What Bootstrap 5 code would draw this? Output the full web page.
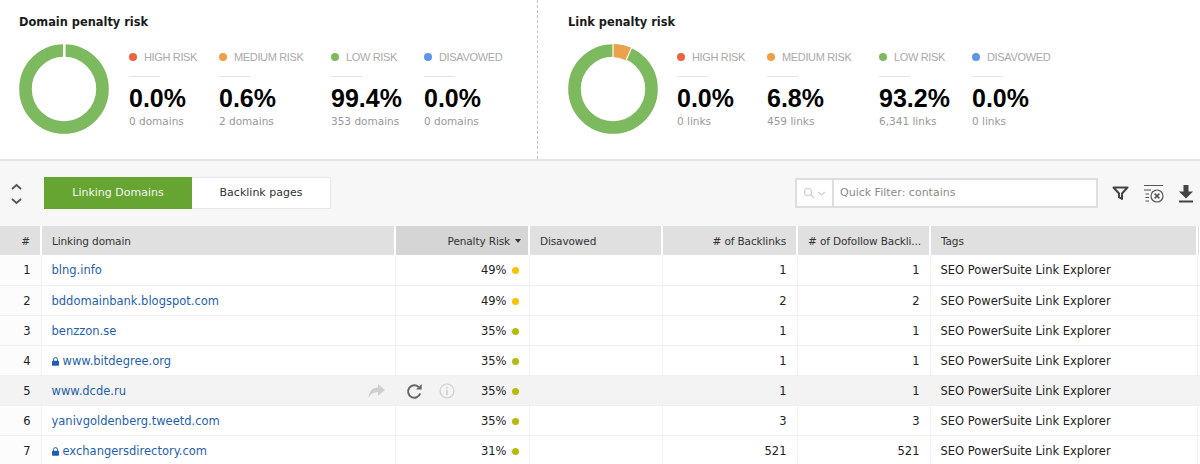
<!DOCTYPE html>
<html lang="en"><head><meta charset="utf-8"><title>Penalty risk</title>
<link href="https://cdn.jsdelivr.net/npm/bootstrap@5.3.0/dist/css/bootstrap.min.css" rel="stylesheet">
<style>
html,body{height:464px;overflow:hidden}
body{font-family:"DejaVu Sans","Liberation Sans",sans-serif;font-size:11px;color:#222;background:#fff}
.summary{height:161px;border-bottom:2px solid #e3e3e3}
.risk-block{padding:14px 0 0 19px;width:537px}
.risk-block+.risk-block{width:663px;border-left:1px dashed #c8c8c8;padding-left:30px}
.risk-title{font-size:11.4px;font-weight:700;color:#1c1c1c;line-height:16px;margin:0 0 14px}
.donut{width:90px;height:90px;margin-right:20px;flex:none}
.risk-block+.risk-block .donut{margin-right:19px}
.stat{padding-top:6px}
.stat:nth-child(1){width:90px}.stat:nth-child(2){width:112px}.stat:nth-child(3){width:93px}.stat:nth-child(4){width:90px}
.stat-label{font-family:"Liberation Sans",sans-serif;font-size:11px;letter-spacing:-.35px;color:#aaa;line-height:14px;display:flex;align-items:center;white-space:nowrap}
.stat-dot{width:8px;height:8px;border-radius:50%;margin-right:7px}
.stat-rule{width:31px;height:1px;background:#e4e4e4;margin:12px 0 7px}
.stat-value{font-family:"Liberation Sans",sans-serif;font-size:25px;font-weight:700;color:#000;line-height:29px}
.stat-sub{color:#999;font-size:10.5px;line-height:14px;margin-top:1px;white-space:nowrap}
.toolbar{height:65px;background:#f7f7f7;padding:0 0 0 11px}
.tabs-box{margin-left:22px;height:32px;margin-top:-1px}
.tab-item{height:32px;display:flex;align-items:center;justify-content:center;background:#fff;border:1px solid #e8e8e8;color:#333;padding-top:1px}
.tab-on{width:148px;background:#66a532;border-color:#66a532;color:#f3f8ee}
.tab-off{width:139px;border-left:0}
.quick{width:303px;height:30px;border:2px solid #dedede;background:#fff;margin-left:auto;margin-top:-1px}
.quick-icon{width:37px;border-right:2px solid #dedede;gap:2px}
.quick-text{color:#8a8a8a;padding:1px 0 0 6px}
.tool-icons{margin:0 6px 0 14px;gap:13.5px}
.grid{table-layout:fixed;width:1200px;margin:0;border-collapse:collapse}
.grid th,.grid td{padding:0 10px;font-weight:400;white-space:nowrap;overflow:hidden;box-shadow:none;background:transparent;color:#222}
.grid thead th{height:29px;background:#e0e0e0;border:0;border-right:2px solid #fff;color:#333;line-height:28px;padding-top:1px;font-size:10.5px;letter-spacing:-.12px}
.grid thead th.sorted{background:#d5d5d5;padding-right:7px}
.grid tbody td{height:30px;border:0;border-bottom:1px solid #f0f0f0;border-right:1px solid #f2f2f2;line-height:27px;padding-top:2px;font-size:11.5px}
.grid tbody td:first-child{background:#fcfcfc;padding:2px 10px 0 0}
.grid thead th:first-child{padding:1px 10px 0 0}
.grid tbody tr.hot td{background:#f3f3f3}
.grid a{color:#1f5fb0;text-decoration:none}
.sort-caret{display:inline-block;border:3px solid transparent;border-top:4px solid #333;border-bottom:0;margin-left:5px;vertical-align:2px}
.risk-dot{display:inline-block;width:7px;height:7px;border-radius:50%;margin-left:5px;vertical-align:0}
.amber{background:#f6c400}.olive{background:#b4bb0c}
</style></head><body>
<section class="summary d-flex">
 <div class="risk-block">
  <h2 class="risk-title">Domain penalty risk</h2>
  <div class="d-flex">
   <svg class="donut" viewBox="0 0 90 90"><circle cx="45" cy="45" r="38.5" fill="none" stroke="#7cb95f" stroke-width="12.6"/><rect x="44" y="0" width="2.6" height="13" fill="#fff"/></svg>
   <div class="d-flex">
    <div class="stat"><div class="stat-label"><span class="stat-dot" style="background:#ec6242"></span>HIGH RISK</div><div class="stat-rule"></div><div class="stat-value">0.0%</div><div class="stat-sub">0 domains</div></div>
    <div class="stat"><div class="stat-label"><span class="stat-dot" style="background:#ef9f45"></span>MEDIUM RISK</div><div class="stat-rule"></div><div class="stat-value">0.6%</div><div class="stat-sub">2 domains</div></div>
    <div class="stat"><div class="stat-label"><span class="stat-dot" style="background:#7cb95f"></span>LOW RISK</div><div class="stat-rule"></div><div class="stat-value">99.4%</div><div class="stat-sub">353 domains</div></div>
    <div class="stat"><div class="stat-label"><span class="stat-dot" style="background:#5b96ea"></span>DISAVOWED</div><div class="stat-rule"></div><div class="stat-value">0.0%</div><div class="stat-sub">0 domains</div></div>
   </div>
  </div>
 </div>
 <div class="risk-block">
  <h2 class="risk-title">Link penalty risk</h2>
  <div class="d-flex">
   <svg class="donut" viewBox="0 0 90 90"><circle cx="45" cy="45" r="38.5" fill="none" stroke="#7cb95f" stroke-width="12.6"/><path d="M45 0.2A44.8 44.8 0 0 1 63.4 4.1L58 16.6A32 32 0 0 0 45 13Z" fill="#eba24a"/><path d="M45 0V13.5M63.8 3.3L57.8 17" stroke="#fff" stroke-width="1.2"/></svg>
   <div class="d-flex">
    <div class="stat"><div class="stat-label"><span class="stat-dot" style="background:#ec6242"></span>HIGH RISK</div><div class="stat-rule"></div><div class="stat-value">0.0%</div><div class="stat-sub">0 links</div></div>
    <div class="stat"><div class="stat-label"><span class="stat-dot" style="background:#ef9f45"></span>MEDIUM RISK</div><div class="stat-rule"></div><div class="stat-value">6.8%</div><div class="stat-sub">459 links</div></div>
    <div class="stat"><div class="stat-label"><span class="stat-dot" style="background:#7cb95f"></span>LOW RISK</div><div class="stat-rule"></div><div class="stat-value">93.2%</div><div class="stat-sub">6,341 links</div></div>
    <div class="stat"><div class="stat-label"><span class="stat-dot" style="background:#5b96ea"></span>DISAVOWED</div><div class="stat-rule"></div><div class="stat-value">0.0%</div><div class="stat-sub">0 links</div></div>
   </div>
  </div>
 </div>
</section>
<div class="toolbar d-flex align-items-center">
 <svg width="11" height="22" viewBox="0 0 11 22" fill="none" stroke="#555" stroke-width="1.8"><path d="M1 6L5.5 2L10 6M1 16L5.5 20L10 16"/></svg>
 <div class="tabs-box d-flex">
  <div class="tab-item tab-on">Linking Domains</div>
  <div class="tab-item tab-off">Backlink pages</div>
 </div>
 <div class="quick d-flex">
  <div class="quick-icon d-flex align-items-center justify-content-center">
   <svg width="12" height="12" viewBox="0 0 12 12" fill="none" stroke="#d0d0d0" stroke-width="1.4"><circle cx="5" cy="5" r="3.6"/><path d="M7.6 7.6L11 11"/></svg>
   <svg width="9" height="5" viewBox="0 0 9 5" fill="none" stroke="#d0d0d0" stroke-width="1.3"><path d="M1 1L4.5 4L8 1"/></svg>
  </div>
  <div class="quick-text d-flex align-items-center">Quick Filter: contains</div>
 </div>
 <div class="tool-icons d-flex align-items-center">
  <svg width="17" height="15" viewBox="0 0 17 15" fill="none" stroke="#444" stroke-width="2"><path d="M1.5 1.5H15.5L10 7.5V13L7 11.2V7.5Z" stroke-linejoin="round"/></svg>
  <svg width="22" height="20" viewBox="0 0 22 20" fill="none" stroke="#555" stroke-width="1.2"><path d="M1 1.5H20M1 6H8M2.5 10H6M2.5 13.5H6M2.5 17H6"/><circle cx="14" cy="12" r="6"/><path d="M11.6 9.6L16.4 14.4M16.4 9.6L11.6 14.4" stroke-width="1.5"/></svg>
  <svg width="16" height="18" viewBox="0 0 16 18" fill="#444"><path d="M5.5 0H10.5V6.5H15L8 13.5L1 6.5H5.5Z"/><rect x="1" y="15.5" width="14" height="2"/></svg>
 </div>
</div>
<table class="table grid">
 <colgroup><col style="width:41px"><col style="width:354px"><col style="width:134px"><col style="width:133px"><col style="width:135px"><col style="width:133px"><col style="width:267px"><col style="width:3px"></colgroup>
 <thead><tr>
  <th class="text-end">#</th><th>Linking domain</th><th class="text-end sorted">Penalty Risk<span class="sort-caret"></span></th><th>Disavowed</th><th class="text-end"># of Backlinks</th><th class="text-end"># of Dofollow Backli...</th><th>Tags</th><th class="p-0"></th>
 </tr></thead>
 <tbody>
  <tr><td class="text-end">1</td><td><a href="#">blng.info</a></td><td class="text-end">49%<span class="risk-dot amber"></span></td><td></td><td class="text-end">1</td><td class="text-end">1</td><td>SEO PowerSuite Link Explorer</td><td class="p-0"></td></tr>
  <tr><td class="text-end">2</td><td><a href="#">bddomainbank.blogspot.com</a></td><td class="text-end">49%<span class="risk-dot amber"></span></td><td></td><td class="text-end">2</td><td class="text-end">2</td><td>SEO PowerSuite Link Explorer</td><td class="p-0"></td></tr>
  <tr><td class="text-end">3</td><td><a href="#">benzzon.se</a></td><td class="text-end">35%<span class="risk-dot olive"></span></td><td></td><td class="text-end">1</td><td class="text-end">1</td><td>SEO PowerSuite Link Explorer</td><td class="p-0"></td></tr>
  <tr><td class="text-end">4</td><td><a href="#"><svg class="me-1" width="7" height="9" viewBox="0 0 7 9" fill="#1f5fb0"><path d="M1.5 4V2.6a2 2 0 0 1 4 0V4" fill="none" stroke="#1f5fb0"/><rect y="3.8" width="7" height="5" rx=".8"/></svg>www.bitdegree.org</a></td><td class="text-end">35%<span class="risk-dot olive"></span></td><td></td><td class="text-end">1</td><td class="text-end">1</td><td>SEO PowerSuite Link Explorer</td><td class="p-0"></td></tr>
  <tr class="hot"><td class="text-end">5</td><td><div class="d-flex justify-content-between align-items-center"><a href="#">www.dcde.ru</a><svg width="17" height="14" viewBox="0 0 17 14" fill="#cfcfcf"><path d="M10 0L17 6L10 12V8.2C6 8.2 2.8 9.5 0.5 13.5C1 8 4 3.8 10 3.6Z"/></svg></div></td><td><div class="d-flex align-items-center justify-content-between"><span class="d-flex align-items-center gap-3"><svg width="17" height="17" viewBox="0 0 17 17" fill="none" stroke="#666" stroke-width="2"><path d="M14.2 10.5A6.2 6.2 0 1 1 12.6 4"/><path d="M15.7 1V6.6H10.1Z" fill="#666" stroke="none"/></svg><svg width="16" height="16" viewBox="0 0 16 16" fill="none" stroke="#cfcfcf" stroke-width="1.2"><circle cx="8" cy="8" r="7"/><path d="M8 7V12M8 4V5.5" stroke-width="1.6"/></svg></span><span>35%<span class="risk-dot olive"></span></span></div></td><td></td><td class="text-end">1</td><td class="text-end">1</td><td>SEO PowerSuite Link Explorer</td><td class="p-0"></td></tr>
  <tr><td class="text-end">6</td><td><a href="#">yanivgoldenberg.tweetd.com</a></td><td class="text-end">35%<span class="risk-dot olive"></span></td><td></td><td class="text-end">3</td><td class="text-end">3</td><td>SEO PowerSuite Link Explorer</td><td class="p-0"></td></tr>
  <tr><td class="text-end">7</td><td><a href="#"><svg class="me-1" width="7" height="9" viewBox="0 0 7 9" fill="#1f5fb0"><path d="M1.5 4V2.6a2 2 0 0 1 4 0V4" fill="none" stroke="#1f5fb0"/><rect y="3.8" width="7" height="5" rx=".8"/></svg>exchangersdirectory.com</a></td><td class="text-end">31%<span class="risk-dot olive"></span></td><td></td><td class="text-end">521</td><td class="text-end">521</td><td>SEO PowerSuite Link Explorer</td><td class="p-0"></td></tr>
 </tbody>
</table>
<script src="https://cdn.jsdelivr.net/npm/bootstrap@5.3.0/dist/js/bootstrap.bundle.min.js"></script>
</body></html>
